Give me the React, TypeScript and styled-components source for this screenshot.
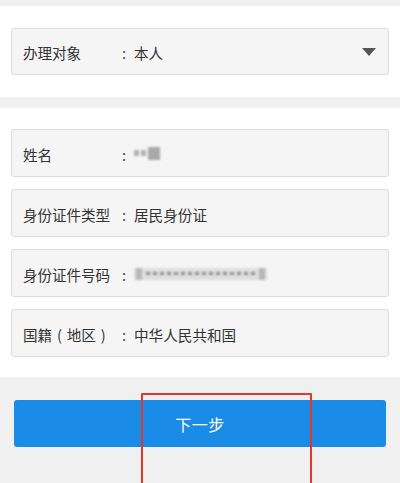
import React from "react";
import styled, { createGlobalStyle } from "styled-components";

const Global = createGlobalStyle`
  html, body { margin: 0; padding: 0; background: #f0f0f0; }
  body { font-family: "Noto Sans CJK SC", "Noto Sans", "Liberation Sans", sans-serif; }
  * { box-sizing: border-box; }
`;

const Page = styled.div`
  position: relative;
  width: 400px;
  height: 483px;
  overflow: hidden;
  background: #f0f0f0;
  padding-top: 6px;
  display: flex;
  flex-direction: column;
`;

const Section = styled.div<{ $top: number; $bottom: number; $gap?: number }>`
  background: #ffffff;
  padding: ${(p) => p.$top}px 11px ${(p) => p.$bottom}px;
  display: flex;
  flex-direction: column;
  gap: ${(p) => p.$gap ?? 0}px;
`;

const Spacer = styled.div<{ $h: number }>`
  height: ${(p) => p.$h}px;
  flex: 0 0 auto;
`;

const Field = styled.div<{ $h?: number }>`
  height: ${(p) => p.$h ?? 48}px;
  border: 1px solid #dcdcdc;
  border-radius: 3px;
  background: #f5f5f5;
  display: flex;
  align-items: center;
  padding: 2px 12px 0 11px;
  font-size: 14.6px;
  color: #333;
`;

const Label = styled.span`
  flex: 0 0 98px;
  white-space: nowrap;
  letter-spacing: -0.1px;
`;

const Paren = styled.span`
  margin: 0 5px;
`;

const Colon = styled.span`
  flex: 0 0 13px;
  padding-left: 1px;
  color: #444;
`;

const Value = styled.span`
  flex: 1;
  white-space: nowrap;
  display: flex;
  align-items: center;
`;

const Caret = styled.span`
  width: 0;
  height: 0;
  border-left: 7px solid transparent;
  border-right: 7px solid transparent;
  border-top: 8px solid #555;
  margin-top: -2px;
`;

const BlurName = styled.span`
  display: inline-flex;
  align-items: center;
  gap: 2px;
  filter: blur(1.1px);
  margin-top: -2px;
`;

const Dot = styled.span<{ $w: number; $h: number; $c: string }>`
  display: inline-block;
  width: ${(p) => p.$w}px;
  height: ${(p) => p.$h}px;
  background: ${(p) => p.$c};
`;

const BlurId = styled.span`
  display: inline-flex;
  align-items: center;
  justify-content: space-between;
  width: 133px;
  height: 12px;
  background: #dedede;
  filter: blur(1.2px);
  padding: 0 2px;
  margin-top: -1px;
`;

const IdEdge = styled.span`
  width: 6px;
  height: 12px;
  background: #b8b8b8;
`;

const Dashes = styled.span`
  flex: 1;
  display: flex;
  justify-content: space-around;
  padding: 0 2px;
`;

const Dash = styled.span`
  width: 4px;
  height: 3px;
  background: #8e8e8e;
`;

const Footer = styled.div`
  flex: 1;
  background: #f0f0f0;
  padding: 23px 14px 0;
`;

const Button = styled.button`
  width: 100%;
  height: 47px;
  border: none;
  border-radius: 3px;
  background: #1a8ce8;
  color: #fff;
  font-family: "Noto Sans CJK SC", sans-serif;
  font-size: 16px;
  letter-spacing: 0.5px;
  padding-top: 2px;
`;

const Highlight = styled.div`
  position: absolute;
  left: 141px;
  top: 393px;
  width: 171px;
  height: 100px;
  border: 2px solid #e0392c;
  border-radius: 1px;
  pointer-events: none;
`;

export default function App() {
  return (
    <>
      <Global />
      <Page>
        <Section $top={22} $bottom={22}>
          <Field $h={47}>
            <Label>办理对象</Label>
            <Colon>:</Colon>
            <Value>本人</Value>
            <Caret />
          </Field>
        </Section>
        <Spacer $h={11} />
        <Section $top={21} $bottom={20} $gap={12}>
          <Field>
            <Label>姓名</Label>
            <Colon>:</Colon>
            <Value>
              <BlurName>
                <Dot $w={5} $h={6} $c="#b0b0b0" />
                <Dot $w={5} $h={6} $c="#b0b0b0" />
                <Dot $w={12} $h={13} $c="#a8a8a8" />
              </BlurName>
            </Value>
          </Field>
          <Field>
            <Label>身份证件类型</Label>
            <Colon>:</Colon>
            <Value>居民身份证</Value>
          </Field>
          <Field>
            <Label>身份证件号码</Label>
            <Colon>:</Colon>
            <Value>
              <BlurId>
                <IdEdge />
                <Dashes>
                  {Array.from({ length: 16 }).map((_, i) => (
                    <Dash key={i} />
                  ))}
                </Dashes>
                <IdEdge />
              </BlurId>
            </Value>
          </Field>
          <Field>
            <Label>
              国籍<Paren>(</Paren>地区<Paren>)</Paren>
            </Label>
            <Colon>:</Colon>
            <Value>中华人民共和国</Value>
          </Field>
        </Section>
        <Footer>
          <Button>下一步</Button>
        </Footer>
        <Highlight />
      </Page>
    </>
  );
}
